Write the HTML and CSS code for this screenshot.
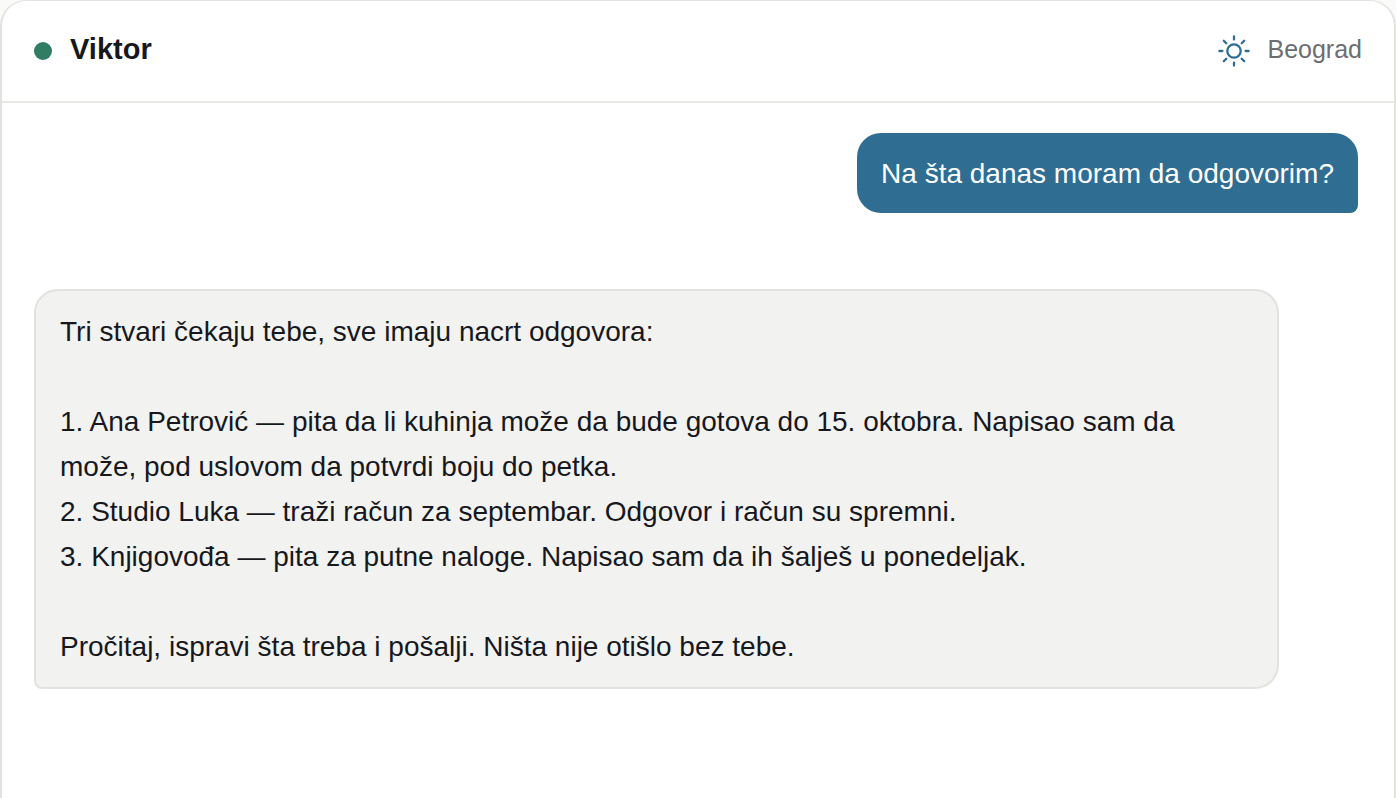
FILE: index.html
```html
<!DOCTYPE html>
<html lang="sr-Latn">
<head>
    <meta charset="UTF-8">
    <meta name="viewport" content="width=device-width, initial-scale=1.0">
    <title>Viktor</title>
    <link rel="stylesheet" href="styles.css">
</head>
<body>
    <main class="chat">
        <header class="chat-header">
            <span class="status"></span>
            <h1 class="name">Viktor</h1>
            <div class="place">
                <svg class="sun" viewBox="0 0 32 32" aria-hidden="true">
                    <circle cx="16" cy="16" r="6.7"/>
                    <path d="M16 1.4v3M16 27.6v3M1.4 16h3M27.6 16h3M5.8 5.8l2.5 2.5M23.7 23.7l2.5 2.5M5.8 26.2l2.5-2.5M23.7 8.3l2.5-2.5"/>
                </svg>
                <span class="city">Beograd</span>
            </div>
        </header>
        <section class="messages">
            <p class="bubble question">Na šta danas moram da odgovorim?</p>
            <div class="bubble answer">
                <p>Tri stvari čekaju tebe, sve imaju nacrt odgovora:</p>
                <div class="items">
                    <p>1. Ana Petrović — pita da li kuhinja može da bude gotova do 15. oktobra. Napisao sam da može, pod uslovom da potvrdi boju do petka.</p>
                    <p>2. Studio Luka — traži račun za septembar. Odgovor i račun su spremni.</p>
                    <p>3. Knjigovođa — pita za putne naloge. Napisao sam da ih šalješ u ponedeljak.</p>
                </div>
                <p>Pročitaj, ispravi šta treba i pošalji. Ništa nije otišlo bez tebe.</p>
            </div>
        </section>
    </main>
</body>
</html>
```
FILE: styles.css
```css
*{
    box-sizing: border-box;
    padding: 0;
    margin: 0;
}
body{
    background-color: #fafaf8;
    color: #16181d;
    font-family: "Liberation Sans", Arial, sans-serif;
    font-size: 28px;
    line-height: 45px;
}
.chat{
    min-height: 100vh;
    background-color: #fff;
    border: 2px solid #e2e2de;
    border-top-width: 1px;
    border-bottom: 0;
    border-radius: 26px 26px 0 0;
}
.chat-header{
    display: flex;
    align-items: center;
    gap: 18px;
    height: 102px;
    padding: 0 32px;
    border-bottom: 2px solid #e8e8e4;
}
.status{
    width: 18px;
    height: 18px;
    border-radius: 50%;
    background-color: #2f7d63;
}
.name{
    padding-bottom: 4px;
    font-size: 29px;
    font-weight: 700;
}
.place{
    display: flex;
    align-items: center;
    gap: 17px;
    margin-left: auto;
    color: #6c6e72;
    font-size: 25px;
}
.city{
    padding-bottom: 4px;
}
.sun{
    width: 32px;
    height: 32px;
    fill: none;
    stroke: #2f6d93;
    stroke-width: 2.3;
    stroke-linecap: round;
}
.messages{
    display: flex;
    flex-direction: column;
    align-items: flex-start;
    gap: 76px;
    padding: 30px 36px 30px 32px;
}
.bubble{
    padding: 18px 24px;
    border-radius: 24px;
}
.question{
    align-self: flex-end;
    padding-bottom: 17px;
    border-bottom-right-radius: 8px;
    background-color: #2f6d93;
    color: #fff;
}
.answer{
    width: 94%;
    border: 2px solid #e2e2de;
    border-bottom-left-radius: 8px;
    background-color: #f2f2f0;
}
.items{
    margin: 45px 0;
}
```
